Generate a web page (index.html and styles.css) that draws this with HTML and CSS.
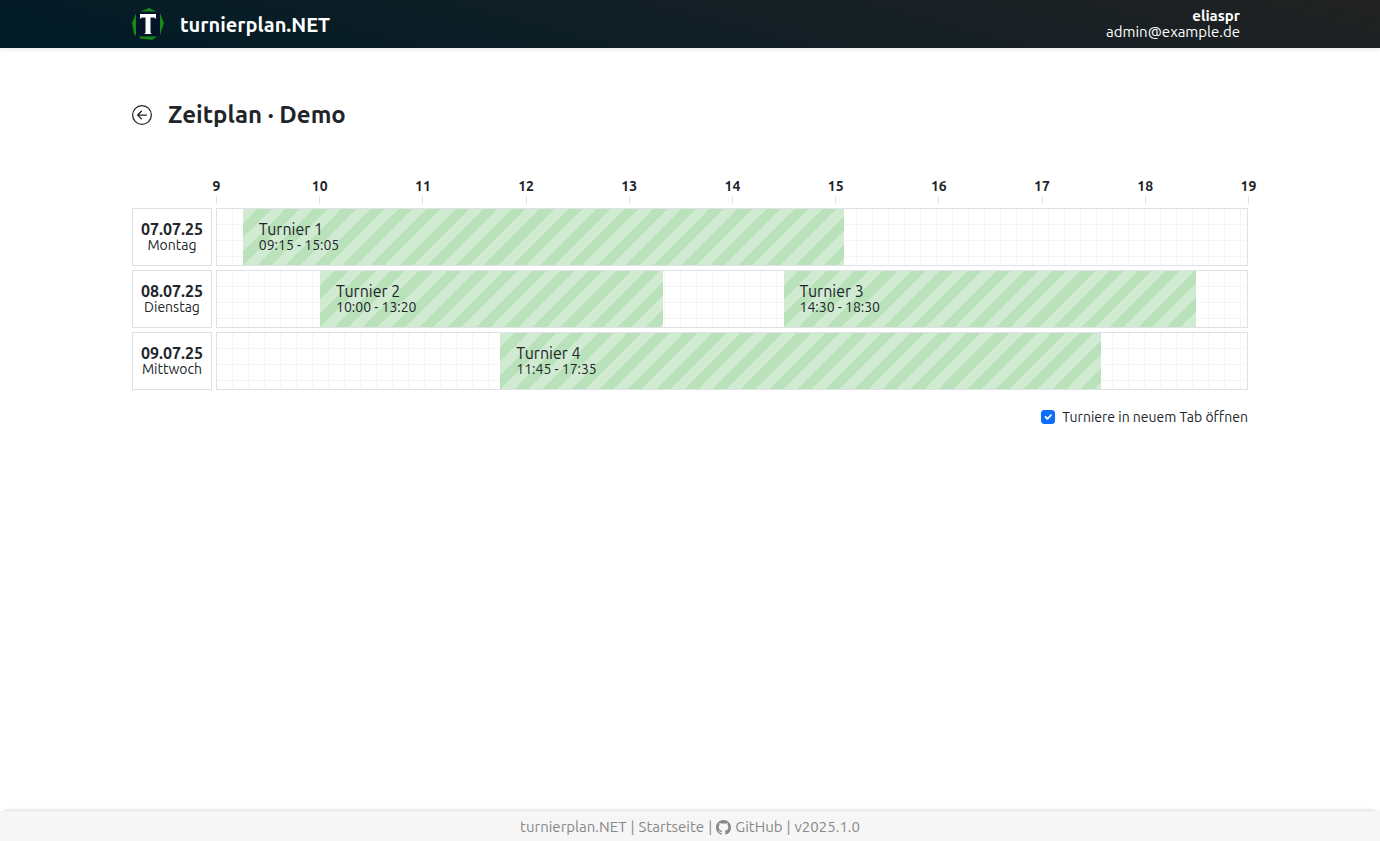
FILE: index.html
```html
<!DOCTYPE html>
<html lang="de">
<head>
<meta charset="utf-8">
<meta name="viewport" content="width=device-width, initial-scale=1">
<title>Zeitplan · Demo</title>
<link rel="stylesheet" href="styles.css">
</head>
<body>
<header class="topbar">
  <div class="container topbar-inner">
    <a class="brand" href="#">
      <svg class="logo" viewBox="0 0 32 32" aria-hidden="true">
        <path fill="#168a16" d="M7 4 17.300 0 25 4zM4 5.500V28L2 26 0 15zM28 5 32 15 28 27zM7 28H25.500L20.500 31.700 8 30.500z"/>
        <rect x="4" y="3.500" width="24" height="25" rx="3" fill="#021628"/>
        <path fill="#fff" d="M8 6h16v4.500h-1l-.5-1h-4V25l1 .5v.5h-7v-.5l1-.5V9.500h-4l-.5 1H8z"/>
      </svg>
      <span class="brand-name">turnierplan.NET</span>
    </a>
    <div class="user">
      <strong>eliaspr</strong>
      <span>admin@example.de</span>
    </div>
  </div>
</header>

<main class="container content">
  <div class="title-row">
    <a class="back" href="#" aria-label="Zurück">
      <svg viewBox="0 0 16 16" fill="currentColor" aria-hidden="true"><path fill-rule="evenodd" d="M1 8a7 7 0 1 0 14 0A7 7 0 0 0 1 8m15 0A8 8 0 1 1 0 8a8 8 0 0 1 16 0m-4.500-.5a.5.5 0 0 1 0 1H5.707l2.147 2.146a.5.5 0 0 1-.708.708l-3-3a.5.5 0 0 1 0-.708l3-3a.5.5 0 1 1 .708.708L5.707 7.500z"/></svg>
    </a>
    <h1>Zeitplan · Demo</h1>
  </div>

  <section class="schedule" aria-label="Zeitplan">
    <div class="hours">
      <span>9</span><span>10</span><span>11</span><span>12</span><span>13</span><span>14</span><span>15</span><span>16</span><span>17</span><span>18</span><span>19</span>
    </div>
    <div class="day">
      <div class="date"><strong>07.07.25</strong><span>Montag</span></div>
      <div class="track">
        <a class="event" href="#" style="left:2.5%;width:58.333%"><span class="event-name">Turnier 1</span><span class="event-time">09:15 - 15:05</span></a>
      </div>
    </div>
    <div class="day">
      <div class="date"><strong>08.07.25</strong><span>Dienstag</span></div>
      <div class="track">
        <a class="event" href="#" style="left:10%;width:33.333%"><span class="event-name">Turnier 2</span><span class="event-time">10:00 - 13:20</span></a>
        <a class="event" href="#" style="left:55%;width:40%"><span class="event-name">Turnier 3</span><span class="event-time">14:30 - 18:30</span></a>
      </div>
    </div>
    <div class="day">
      <div class="date"><strong>09.07.25</strong><span>Mittwoch</span></div>
      <div class="track">
        <a class="event" href="#" style="left:27.5%;width:58.333%"><span class="event-name">Turnier 4</span><span class="event-time">11:45 - 17:35</span></a>
      </div>
    </div>
  </section>

  <div class="option">
    <input type="checkbox" id="new-tab" checked>
    <label for="new-tab">Turniere in neuem Tab öffnen</label>
  </div>
</main>

<footer class="footer">
  <a href="#">turnierplan.NET</a>
  <span>|</span>
  <a href="#">Startseite</a>
  <span>|</span>
  <a class="github" href="#">
    <svg viewBox="0 0 16 16" fill="currentColor" aria-hidden="true"><path d="M8 0C3.580 0 0 3.580 0 8c0 3.540 2.290 6.530 5.470 7.590.4.070.55-.17.55-.38 0-.19-.01-.82-.01-1.490-2.010.37-2.530-.49-2.690-.94-.09-.23-.48-.94-.82-1.130-.28-.15-.68-.52-.01-.53.63-.01 1.080.58 1.230.82.72 1.210 1.870.87 2.330.66.07-.52.28-.87.51-1.070-1.780-.2-3.640-.89-3.640-3.950 0-.87.31-1.590.82-2.150-.08-.2-.36-1.020.08-2.120 0 0 .67-.21 2.200.82.64-.18 1.320-.27 2-.27s1.360.09 2 .27c1.530-1.040 2.200-.82 2.200-.82.44 1.100.16 1.920.08 2.120.51.56.82 1.270.82 2.150 0 3.070-1.870 3.750-3.650 3.950.29.25.54.73.54 1.480 0 1.070-.01 1.930-.01 2.200 0 .21.15.46.55.38A8.010 8.010 0 0 0 16 8c0-4.420-3.580-8-8-8"/></svg>
    GitHub</a>
  <span>|</span>
  <span>v2025.1.0</span>
</footer>
</body>
</html>
```

FILE: styles.css
```css
*, *::before, *::after { box-sizing: border-box; }

body {
  margin: 0;
  min-height: 100vh;
  display: flex;
  flex-direction: column;
  background: #fff;
  color: #212529;
  font-family: Ubuntu, "Noto Sans", "Open Sans", sans-serif;
  font-size: 14px;
  line-height: 16px;
}

a { color: inherit; text-decoration: none; }
svg { display: block; }

.container {
  width: 100%;
  max-width: 1140px;
  margin: 0 auto;
  padding: 0 12px;
}

.topbar {
  background: linear-gradient(15deg, #001b27, #222);
  color: #fff;
  box-shadow: 0 2px 4px rgba(0, 0, 0, .08);
}

.topbar-inner {
  display: flex;
  align-items: center;
  justify-content: space-between;
  padding: 8px 20px 8px 12px;
}

.brand { display: flex; align-items: center; gap: 16px; }
.logo { width: 32px; height: 32px; }
.brand-name { font-size: 20px; line-height: 25px; font-weight: 700; }
.user { display: flex; flex-direction: column; text-align: right; font-size: 15px; }

.content { flex: 1; padding-top: 48px; }
.title-row { display: flex; align-items: center; gap: 16px; }
.back svg { width: 20px; height: 20px; }
h1 { margin: 0; font-size: 24px; line-height: 37px; font-weight: 700; }

.schedule {
  margin-top: 43px;
  display: flex;
  flex-direction: column;
  gap: 4px;
}

.hours {
  display: flex;
  justify-content: space-between;
  margin: 0 -1px 0 84px;
  font-weight: 700;
}

.hours span {
  width: 1px;
  height: 28px;
  display: flex;
  flex-direction: column;
  align-items: center;
  justify-content: space-between;
  padding-top: 2px;
}

.hours span::after { content: ""; width: 1px; height: 8px; background: #dee2e6; }

.day { display: flex; gap: 4px; height: 58px; }

.date {
  width: 80px;
  display: flex;
  flex-direction: column;
  align-items: center;
  justify-content: center;
  border: 1px solid #dee2e6;
}

.date strong { font-size: 16px; }

.track {
  position: relative;
  flex: 1;
  border: 1px solid #dee2e6;
  background-image:
    repeating-linear-gradient(90deg, transparent 0 15px, #f5f5f5 15px 16px),
    repeating-linear-gradient(180deg, transparent 0 15px, #f5f5f5 15px 16px);
}

.event {
  position: absolute;
  top: 0;
  bottom: 0;
  display: flex;
  flex-direction: column;
  justify-content: center;
  padding: 0 16px;
  background: repeating-linear-gradient(135deg, #d1ebd3 0 10px, #b9e1ba 10px 20px);
}

.event-name { font-size: 16px; }

.option {
  display: flex;
  align-items: center;
  justify-content: flex-end;
  gap: 7px;
  margin-top: 19px;
}

.option input {
  appearance: none;
  width: 14px;
  height: 14px;
  margin: 0;
  border-radius: 3px;
  border: 1px solid #0d6efd;
}

.option input:checked {
  background: #0d6efd url("data:image/svg+xml,%3Csvg xmlns='http://www.w3.org/2000/svg' viewBox='0 0 20 20'%3E%3Cpath fill='none' stroke='%23fff' stroke-linecap='round' stroke-linejoin='round' stroke-width='3' d='m6 10 3 3 6-6'/%3E%3C/svg%3E") center / contain no-repeat;
}

.footer {
  display: flex;
  justify-content: center;
  gap: 4px;
  padding: 8px 0 6px;
  background: #f6f6f6;
  color: #888;
  font-size: 15px;
  box-shadow: 0 -4px 4px -4px rgba(0, 0, 0, .25);
}

.github { display: flex; align-items: center; gap: 4px; }
.github svg { width: 15px; height: 15px; }
```
